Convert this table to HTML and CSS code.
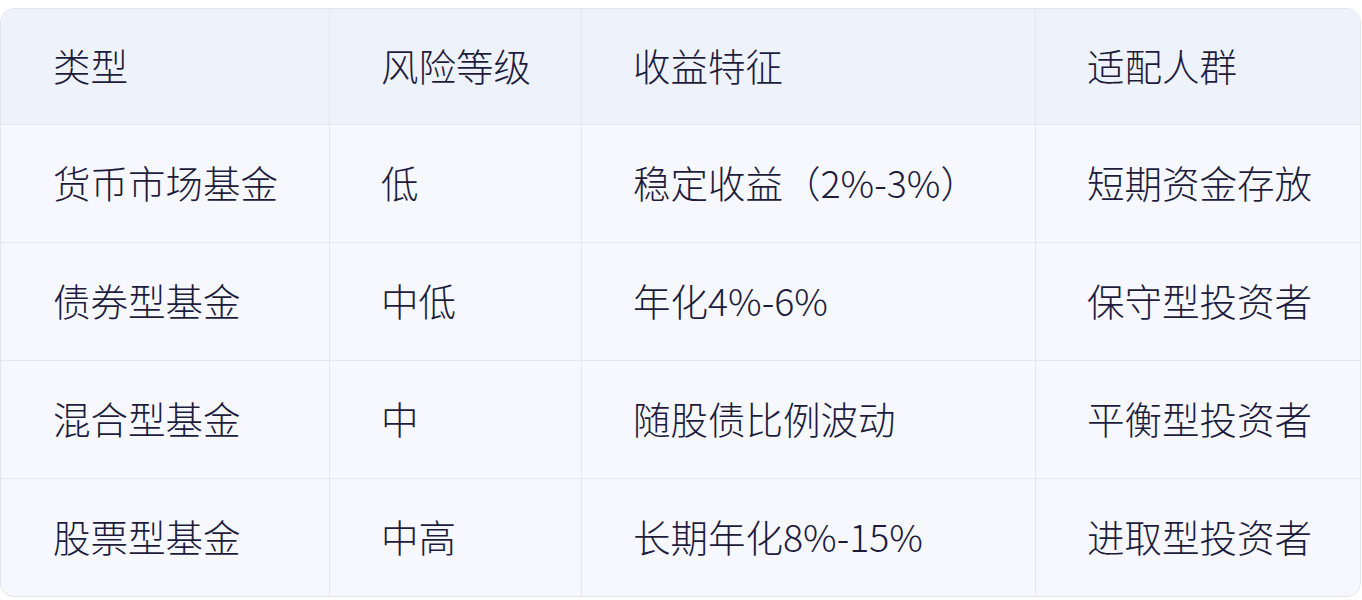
FILE: index.html
```html
<!DOCTYPE html>
<html lang="zh-CN">
<head>
<meta charset="utf-8">
<title>基金类型</title>
<link rel="stylesheet" href="styles.css">
</head>
<body>
<div class="page">
  <div class="table">
    <div class="cell head first">类型</div>
    <div class="cell head">风险等级</div>
    <div class="cell head">收益特征</div>
    <div class="cell head">适配人群</div>

    <div class="cell first">货币市场基金</div>
    <div class="cell">低</div>
    <div class="cell">稳定收益（2%-3%）</div>
    <div class="cell">短期资金存放</div>

    <div class="cell first">债券型基金</div>
    <div class="cell">中低</div>
    <div class="cell">年化4%-6%</div>
    <div class="cell">保守型投资者</div>

    <div class="cell first">混合型基金</div>
    <div class="cell">中</div>
    <div class="cell">随股债比例波动</div>
    <div class="cell">平衡型投资者</div>

    <div class="cell first last">股票型基金</div>
    <div class="cell last">中高</div>
    <div class="cell last">长期年化8%-15%</div>
    <div class="cell last">进取型投资者</div>
  </div>
</div>
</body>
</html>
```

FILE: styles.css
```css
html, body {
  margin: 0;
  padding: 0;
  background: #ffffff;
}
.page {
  padding-top: 8px;
}
.table {
  width: 1361px;
  box-sizing: border-box;
  border: 1px solid #e1e5ee;
  border-radius: 14px;
  overflow: hidden;
  background: #f6f8fd;
  display: grid;
  grid-template-columns: 328px 252px 454px 1fr;
  grid-template-rows: 116px 118px 118px 118px 117px;
  font-family: "Noto Sans CJK SC", "Noto Sans", sans-serif;
  font-size: 37.5px;
  font-weight: 300;
  color: #1d1c3d;
}
.cell {
  display: flex;
  align-items: center;
  padding-left: 51px;
  padding-bottom: 3px;
  border-left: 1px solid #e3e7ef;
  border-bottom: 1px solid #e3e7ef;
  white-space: nowrap;
  line-height: 1;
}
.cell.first {
  border-left: none;
  padding-left: 52px;
}
.cell.last {
  border-bottom: none;
}
.cell.head {
  background: #eef2fa;
}
.num {
  letter-spacing: 0.5px;
}
```
